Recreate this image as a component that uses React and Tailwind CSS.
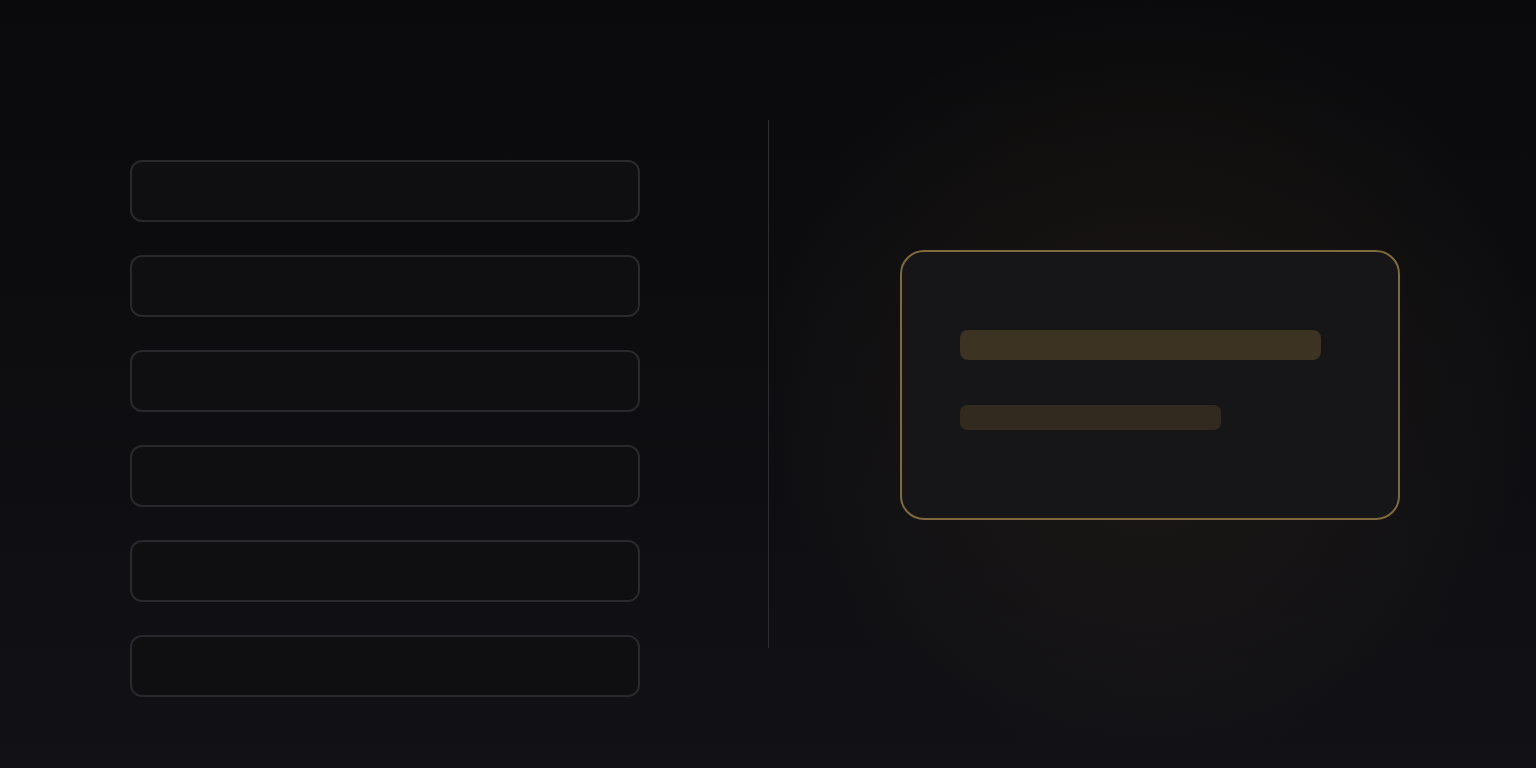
import React from 'react';

const ROWS = [0, 1, 2, 3, 4, 5];

export default function App() {
  return (
    <div className="relative h-screen w-full overflow-hidden bg-gradient-to-b from-[#0a0a0c] to-[#111116]">
      <div className="flex h-full pl-[130px]">
        <div className="flex w-[510px] flex-col gap-[33px] pt-[160px]">
          {ROWS.map((i) => (
            <div
              key={i}
              className="h-[62px] rounded-[12px] border-2 border-[#29292d] bg-[#0f0f12]"
            />
          ))}
        </div>

        <div className="ml-[128px] mt-[120px] h-[528px] w-px bg-[#2c2c31]" />

        <div className="relative ml-[131px] mt-[250px] h-[270px] w-[500px]">
          {/* soft warm glow behind the card */}
          <div className="pointer-events-none absolute left-1/2 top-1/2 h-[760px] w-[760px] -translate-x-1/2 -translate-y-1/2 rounded-full bg-[radial-gradient(circle,rgba(160,115,40,0.09)_0%,rgba(160,115,40,0.05)_35%,rgba(160,115,40,0.02)_60%,transparent_72%)]" />
          <div className="relative h-full w-full rounded-[24px] border-2 border-[#7f6a3e] bg-[#161619] px-[58px] pt-[78px]">
            <div className="h-[30px] w-[361px] rounded-[8px] bg-[#3d3322]" />
            <div className="mt-[45px] h-[25px] w-[261px] rounded-[7px] bg-[#322a1e]" />
          </div>
        </div>
      </div>
    </div>
  );
}
